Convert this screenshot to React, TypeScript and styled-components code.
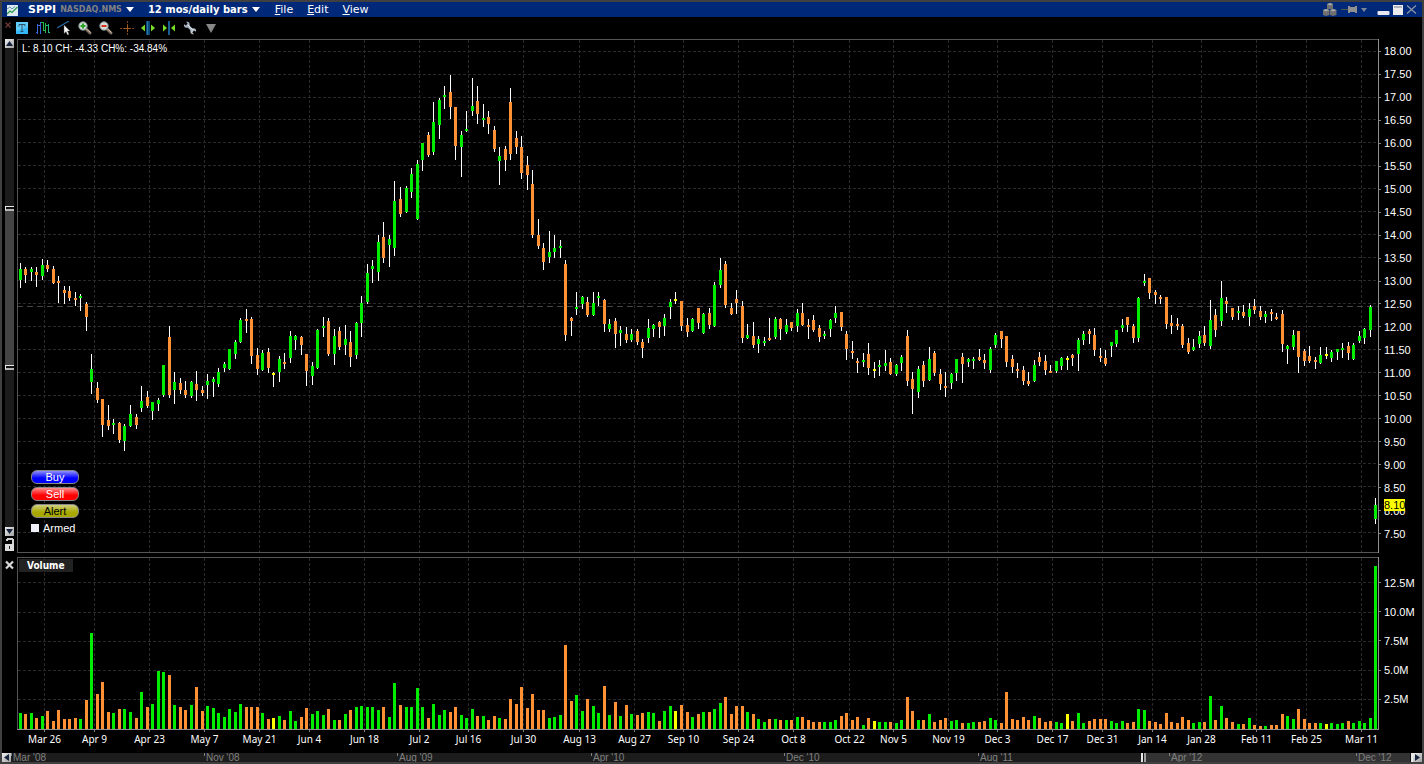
import React from 'react';
import styled, { createGlobalStyle } from 'styled-components';

const sans = '"Liberation Sans", Arial, sans-serif';
const wide = '"DejaVu Sans", Verdana, sans-serif';
const narrow = '"DejaVu Sans Condensed", Tahoma, sans-serif';

const UP = '#00ec00';
const DOWN = '#ff9033';
const FLAT = '#ffff00';

type Bar = { high: number; low: number; top: number; bottom: number; fill: string; volume: number };

/* One entry per session: wick top, wick bottom, body top, body bottom, direction, volume height. */
const SESSIONS = `
263 288 269 280 G 16,267 283 269 275 O 15,267 281 269 272 G 16,267 287 272 275 O 11,259 280 265 276 G 13,
260 272 265 269 O 18,266 284 269 283 O 8,276 303 281 283 O 19,286 304 290 293 O 10,286 301 291 298 O 10,
292 306 298 300 O 11,294 311 296 298 G 10,302 331 304 317 O 29,354 394 369 382 G 96,382 403 388 400 O 35,
399 437 399 425 O 47,405 430 420 426 O 17,419 434 423 425 G 16,422 443 423 440 O 20,424 451 426 441 G 20,
405 427 414 426 G 17,414 429 417 425 O 11,386 412 401 408 G 37,391 408 397 406 O 22,402 420 402 411 G 25,
398 411 400 404 G 58,365 397 365 395 G 57,326 398 337 395 O 54,372 404 382 390 G 24,378 394 383 390 O 22,
381 398 390 395 O 19,381 398 382 396 G 24,371 401 384 390 O 42,386 396 390 393 O 18,374 399 381 385 G 23,
377 397 379 382 G 21,368 387 372 384 G 16,362 372 364 368 G 12,349 370 349 369 G 20,340 359 342 354 G 17,
318 343 320 342 G 25,309 333 319 321 O 22,317 364 319 356 O 22,348 375 355 369 O 22,350 371 353 370 G 16,
348 373 352 368 O 10,372 387 373 375 Y 11,356 382 359 372 G 13,353 369 362 364 O 9,331 363 336 358 G 18,
335 350 336 340 G 8,336 355 337 345 O 12,354 386 354 371 O 21,362 385 366 376 G 15,329 369 330 368 G 18,
317 337 326 328 G 14,318 356 321 354 O 20,329 365 336 354 G 9,327 350 331 347 O 9,325 355 339 345 G 15,
331 367 342 357 O 19,322 359 323 355 G 22,296 337 303 323 G 23,264 304 273 302 G 22,260 283 266 269 G 22,
235 281 242 272 G 19,222 263 237 258 O 22,235 267 239 245 G 12,181 256 201 248 G 46,187 217 199 214 O 24,
186 213 188 212 G 22,168 198 174 192 G 22,160 220 164 219 G 41,143 171 143 160 G 22,132 157 135 155 O 11,
102 155 122 152 G 25,98 139 100 125 G 14,86 109 95 97 G 19,75 119 92 107 O 17,107 160 107 146 O 22,
131 177 135 147 G 14,111 132 129 131 G 11,78 116 106 111 G 20,86 124 101 114 O 13,104 127 118 120 G 13,
111 134 117 124 O 9,126 152 130 149 O 13,147 185 156 161 G 11,146 171 149 160 O 10,88 160 102 154 O 30,
131 154 138 147 O 25,136 179 147 173 O 42,156 190 165 175 O 21,170 238 184 235 O 35,219 249 235 246 O 19,
243 270 248 262 O 19,231 263 252 257 G 11,235 258 248 252 G 12,240 258 246 248 G 14,260 341 264 335 O 84,
317 336 318 321 O 28,292 315 307 309 G 34,296 309 297 304 G 18,297 317 302 315 O 30,292 316 303 315 G 23,
292 306 296 298 G 16,299 332 300 324 O 43,319 332 324 329 G 14,318 348 321 334 O 27,326 346 330 333 G 13,
327 343 334 340 O 24,329 342 334 340 G 15,329 345 331 342 O 14,339 358 342 348 O 16,319 343 328 338 G 17,
324 337 325 329 G 16,321 338 322 327 O 8,314 336 318 326 G 18,299 319 302 307 G 23,292 304 299 301 Y 18,
301 331 301 326 O 24,318 337 325 332 O 17,318 332 319 331 G 12,308 329 308 323 O 15,313 334 314 333 G 17,
308 329 313 325 O 17,282 327 285 326 G 20,258 288 270 285 G 26,261 308 264 305 O 32,303 315 308 314 O 15,
290 314 299 303 O 23,301 343 306 338 O 23,324 339 335 338 G 17,322 348 336 345 O 15,336 353 339 344 G 10,
337 346 341 343 G 7,318 341 338 340 O 10,317 339 319 337 G 10,318 340 319 329 O 9,319 334 325 332 G 9,
322 331 322 328 O 9,309 332 313 326 G 12,303 326 313 325 O 12,319 339 325 327 O 9,315 332 320 330 O 7,
325 342 328 337 O 7,331 339 334 336 G 7,319 337 320 329 G 7,306 323 313 318 G 9,312 331 312 327 O 13,
331 360 334 349 O 16,341 359 351 353 O 9,358 373 361 363 O 12,353 367 360 362 G 4,343 375 354 368 O 11,
362 378 369 371 Y 8,360 376 365 367 G 7,350 371 363 366 G 7,358 375 362 374 O 7,364 376 365 374 G 6,
355 371 357 363 G 9,330 386 336 381 O 32,372 414 379 389 O 18,366 398 369 392 G 9,361 387 365 381 O 9,
347 381 359 380 G 15,351 376 353 373 O 7,369 390 374 384 O 9,372 397 386 388 O 11,373 389 374 383 G 8,
359 381 359 373 G 9,353 383 357 364 O 6,358 367 359 362 G 6,357 369 359 361 G 7,349 361 357 360 O 7,
354 369 360 363 O 8,347 373 349 370 G 11,333 348 335 345 G 9,331 348 331 339 O 6,336 367 336 362 O 37,
355 373 359 367 O 10,363 378 369 371 O 9,366 385 370 381 O 12,372 386 381 384 O 9,360 382 365 381 G 13,
352 366 357 362 O 11,355 375 361 370 O 7,365 373 371 373 O 8,361 373 361 371 G 7,357 370 358 366 G 6,
356 370 358 360 Y 15,354 366 355 358 O 8,338 371 340 354 G 16,331 345 334 340 G 6,329 344 331 334 O 8,
328 356 335 350 O 10,348 362 356 358 O 10,350 366 358 364 O 10,342 357 342 346 G 8,330 347 330 344 G 6,
319 332 325 328 G 8,317 332 317 325 O 6,324 343 326 338 O 7,297 342 298 338 G 20,274 286 281 283 G 19,
278 299 278 293 O 8,290 304 292 295 O 7,295 304 297 299 O 5,297 329 297 324 O 16,315 334 323 326 O 7,
318 330 324 326 O 6,324 348 326 345 O 12,338 354 343 352 O 9,339 351 347 350 G 6,331 348 336 344 G 7,
326 346 335 343 O 7,300 349 320 346 G 33,309 337 315 330 O 9,281 326 298 321 G 23,297 313 301 304 O 11,
308 320 308 317 O 7,306 320 311 313 G 5,305 318 312 316 O 5,303 326 309 317 G 11,299 314 306 310 O 4,
306 320 311 317 O 3,311 323 314 317 G 3,309 321 312 314 O 4,313 320 317 319 O 4,310 352 314 344 O 15,
345 364 346 349 G 13,330 350 335 347 G 10,331 373 331 357 O 20,349 366 351 361 O 10,346 363 356 361 O 6,
357 369 360 362 O 6,347 364 355 363 G 6,347 359 354 356 Y 5,350 362 352 358 G 6,349 360 349 352 G 5,
343 358 348 350 G 6,342 360 346 353 O 8,343 360 345 359 G 6,331 343 336 341 G 8,328 344 329 338 G 6,
305 337 307 330 G 11,498 524 505 519 G 163`;

const FILLS: Record<string, string> = { G: UP, O: DOWN, Y: FLAT };

const bars: Bar[] = SESSIONS.trim().split(',').map((row) => {
  const [high, low, top, bottom, kind, volume] = row.trim().split(' ');
  return { high: +high, low: +low, top: +top, bottom: +bottom, fill: FILLS[kind], volume: +volume };
});

const barX = (index: number) => Math.floor(20.3 + 5.51 * index);

const DATES: [string, number][] = [
  ['Mar 26', 44], ['Apr 9', 94], ['Apr 23', 149], ['May 7', 204], ['May 21', 259], ['Jun 4', 309],
  ['Jun 18', 364], ['Jul 2', 419], ['Jul 16', 468], ['Jul 30', 523], ['Aug 13', 579], ['Aug 27', 634],
  ['Sep 10', 683], ['Sep 24', 738], ['Oct 8', 793], ['Oct 22', 849], ['Nov 5', 893], ['Nov 19', 948],
  ['Dec 3', 997], ['Dec 17', 1052], ['Dec 31', 1102], ['Jan 14', 1152], ['Jan 28', 1201],
  ['Feb 11', 1256], ['Feb 25', 1306], ['Mar 11', 1361],
];

const PRICE_LINES = [51, 74, 97, 119, 142, 165, 188, 211, 234, 257, 280, 303, 326, 349, 372, 395, 418, 441, 463, 486, 509, 532];
const PRICES = PRICE_LINES.map((_, i) => (18 - i * 0.5).toFixed(2));
const VOLUME_LINES = [582, 612, 641, 670, 699];
const VOLUMES = ['12.5M', '10.0M', '7.5M', '5.0M', '2.5M'];

const HISTORY: [string, number][] = [
  ["Mar '08", 193], ["Nov '08", 193], ["Aug '09", 194], ["Apr '10", 193],
  ["Dec '10", 194], ["Aug '11", 191], ["Apr '12", 187], ["Dec '12", 57],
];

const CHART_LEFT = 17;
const CHART_RIGHT = 1379;
const dateColumns = DATES.map(([, x], i) => (i === DATES.length - 1 ? CHART_RIGHT : DATES[i + 1][1]) - x)
  .reduce((tracks, gap) => `${tracks} minmax(0, ${gap}fr)`, `minmax(0, ${DATES[0][1] - CHART_LEFT}fr)`);

const GlobalStyle = createGlobalStyle`
  *, *::before, *::after { box-sizing: border-box; }
  body { margin: 0; background: #000; }
  button { margin: 0; padding: 0; border: 0; background: none; color: inherit; font: inherit; }
`;

const Frame = styled.div`
  display: flex;
  flex-direction: column;
  height: 100vh;
  min-height: 480px;
  border: 2px solid #404040;
  background: #000;
  color: #fff;
  font: 11px/12px ${sans};
  overflow: hidden;
`;

const TitleBar = styled.header`
  display: flex;
  align-items: center;
  flex: none;
  height: 15px;
  padding: 0 5px;
  background: linear-gradient(#00297a, #002878);
  white-space: nowrap;
  font-family: ${wide};
`;

const AppIcon = styled.svg`
  width: 11px;
  height: 12px;
  margin-right: 10px;
`;

const PickerButton = styled.button`
  display: flex;
  align-items: center;
  gap: 4px;
  margin-right: 14px;
  font-weight: bold;
  line-height: 15px;
`;

const Symbol = styled.span`
  font-size: 11px;
`;

const Exchange = styled.span`
  font-size: 8px;
  color: #808080;
`;

const Period = styled.span`
  font-size: 10px;
`;

const Caret = styled.span<{ $color?: string; $small?: boolean }>`
  border: ${(p) => (p.$small ? 3 : 4)}px solid transparent;
  border-top: ${(p) => (p.$small ? 4 : 5)}px solid ${(p) => p.$color ?? '#fff'};
  border-bottom: 0;
`;

const Menu = styled.nav`
  display: flex;
  gap: 14px;
  flex: 1;
  padding-left: 1px;
`;

const MenuButton = styled.button`
  line-height: 15px;
  &::first-letter { text-decoration: underline; }
`;

const WindowTools = styled.div`
  display: flex;
  align-items: center;
  gap: 4px;
`;

const WindowButtons = styled.div`
  display: flex;
  align-items: center;
  gap: 3px;
  margin-left: 6px;
`;

const IconButton = styled.button`
  display: flex;
  align-items: center;
  justify-content: center;
`;

const ToolBar = styled.div`
  display: flex;
  align-items: center;
  flex: none;
  gap: 7px;
  height: 22px;
  padding: 0 3px;
`;

const ClosePanel = styled(IconButton)`
  width: 6px;
  height: 14px;
  align-items: flex-start;
  margin-right: -3px;
`;

const ToolButton = styled(IconButton)`
  width: 14px;
  height: 14px;
`;

const Workspace = styled.main`
  display: grid;
  flex: 1;
  min-height: 0;
  grid-template-columns: 15px minmax(0, 1fr) 43px;
  grid-template-rows: minmax(0, 514fr) 4px minmax(0, 173fr) 23px;
`;

const Gutter = styled.div<{ $row: number }>`
  grid-column: 1;
  grid-row: ${(p) => p.$row};
  display: flex;
  flex-direction: column;
  min-height: 0;
  padding: 0 3px;
`;

const ScrollArrow = styled.button`
  display: flex;
  align-items: center;
  justify-content: center;
  flex: none;
  width: 9px;
  height: 9px;
  background: linear-gradient(135deg, #f0f0f0, #a0a0a0);
`;

const Track = styled.div`
  display: flex;
  flex-direction: column;
  flex: 1;
  width: 9px;
  background: #1c1c1c;
`;

const TrackSpace = styled.div<{ $grow: number }>`
  flex: ${(p) => p.$grow} 1 0;
`;

const Thumb = styled.div`
  display: flex;
  flex-direction: column;
  justify-content: space-between;
  flex: 163 1 0;
  background: #444;
`;

const Grip = styled.div`
  height: 5px;
  border: solid #e8e8e8;
  border-width: 1px 0 2px 1px;
  border-bottom-color: #b4b4b4;
  background: #111;
`;

const LockButton = styled(IconButton)`
  width: 9px;
  height: 17px;
`;

const CloseStudy = styled(IconButton)`
  width: 9px;
  height: 15px;
`;

const Plot = styled.section<{ $row: number }>`
  position: relative;
  grid-column: 2;
  grid-row: ${(p) => p.$row};
  min-height: 0;
`;

const PlotCanvas = styled.svg`
  display: block;
  width: 100%;
  height: 100%;
`;

const Quote = styled.div`
  position: absolute;
  top: 4px;
  left: 5px;
  font-size: 10px;
`;

const StudyName = styled.h2`
  position: absolute;
  top: 2px;
  left: 2px;
  margin: 0;
  padding: 0 8px;
  background: #222;
  font: bold 10px/13px ${narrow};
`;

const TradePanel = styled.div`
  position: absolute;
  left: 14px;
  bottom: 18px;
  display: flex;
  flex-direction: column;
  gap: 3px;
`;

const TradeButton = styled.button<{ $light: string; $base: string; $ink?: string }>`
  width: 48px;
  height: 14px;
  border: 1px solid #88888c;
  border-radius: 6px;
  background: linear-gradient(${(p) => p.$light}, ${(p) => p.$base} 60%);
  color: ${(p) => p.$ink ?? '#fff'};
  line-height: 12px;
`;

const Armed = styled.label`
  display: flex;
  align-items: center;
  gap: 4px;
  height: 14px;
  input {
    appearance: none;
    width: 8px;
    height: 8px;
    margin: 0;
    background: #f0f0fa;
  }
`;

const Scale = styled.div<{ $row: number; $padding: string }>`
  position: relative;
  grid-column: 3;
  grid-row: ${(p) => p.$row};
  display: grid;
  grid-auto-rows: minmax(0, 1fr);
  min-height: 0;
  padding: ${(p) => p.$padding};
`;

const ScaleMark = styled.div`
  display: flex;
  align-items: center;
  gap: 3px;
  &::before {
    content: '';
    width: 2px;
    height: 1px;
    background: #808080;
  }
`;

const LastPrice = styled.div`
  position: absolute;
  top: calc(89% + 3px);
  left: 5px;
  background: #ffff00;
  color: #000;
`;

const DateAxis = styled.div`
  grid-column: 2;
  grid-row: 4;
  display: grid;
  grid-template-columns: ${dateColumns};
`;

const DateMark = styled.div`
  display: flex;
  flex-direction: column;
  align-items: center;
  gap: 1px;
  width: 1px;
  font: 10px/12px "Noto Sans", ${wide};
  white-space: nowrap;
  &:first-child { grid-column: 2; }
  &::before {
    content: '';
    width: 1px;
    height: 2px;
    background: #808080;
  }
`;

const History = styled.footer`
  display: flex;
  flex: none;
  height: 9px;
  background: #1c1c1c;
`;

const HistoryTrack = styled.div`
  position: relative;
  display: grid;
  flex: 1;
  grid-template-columns: ${HISTORY.map(([, w]) => `minmax(0, ${w}fr)`).join(' ')};
`;

const HistoryMark = styled.span`
  position: relative;
  padding-left: 2px;
  color: #808080;
  font-size: 10px;
  line-height: 9px;
  white-space: nowrap;
  &::before {
    content: '';
    position: absolute;
    top: 0;
    left: 0;
    width: 1px;
    height: 3px;
    background: #808080;
  }
`;

const HistoryWindow = styled.div`
  position: absolute;
  inset: 0 0 0 80.6%;
  border: solid #e8e8e8;
  border-width: 0 2px;
  box-shadow: inset 1px 0 #111, inset 3px 0 #a0a0a0, inset -1px 0 #111;
  background: #333;
`;

function Grid({ lines, top, bottom }: { lines: number[]; top: number; bottom: number }) {
  return (
    <g stroke="#2a2a2a" strokeDasharray="3 2">
      {lines.map((y) => <line key={y} x1="18" x2="1378" y1={y + 0.5} y2={y + 0.5} />)}
      {DATES.map(([, x]) => <line key={x} x1={x + 0.5} x2={x + 0.5} y1={top} y2={bottom} />)}
    </g>
  );
}

function PriceChart() {
  return (
    <PlotCanvas viewBox="17 39 1362 514" preserveAspectRatio="none" shapeRendering="crispEdges" role="img" aria-label="SPPI daily price">
      <Grid lines={PRICE_LINES} top={40} bottom={552} />
      <line x1="17" x2="1378" y1="306.5" y2="306.5" stroke="#444" strokeDasharray="6 4" />
      {bars.map((bar, i) => (
        <g key={i}>
          <rect x={barX(i)} y={bar.high} width="1" height={bar.low - bar.high} fill="#fff" />
          <rect x={barX(i) - 1} y={bar.top} width="3" height={bar.bottom - bar.top} fill={bar.fill} />
        </g>
      ))}
      <path d="M17.5 553V39.5H1378M18 552.5H1378" fill="none" stroke="#555" />
      <path d="M1378.5 39V553" stroke="#909090" />
    </PlotCanvas>
  );
}

function VolumeChart() {
  return (
    <PlotCanvas viewBox="17 557 1362 173" preserveAspectRatio="none" shapeRendering="crispEdges" role="img" aria-label="Volume">
      <Grid lines={VOLUME_LINES} top={558} bottom={729} />
      {bars.map((bar, i) => (
        <rect key={i} x={barX(i) - 1} y={729 - bar.volume} width="3" height={bar.volume} fill={bar.fill} />
      ))}
      <path d="M17.5 730V557.5H1378" fill="none" stroke="#555" />
      <path d="M1378.5 557V730M17 729.5H1379" stroke="#909090" />
    </PlotCanvas>
  );
}

function Magnifier({ color, plus }: { color: string; plus?: boolean }) {
  return (
    <svg width="14" height="14" viewBox="0 0 14 14">
      <path d="M8 8L12 12" stroke="#7a6a60" strokeWidth="3" strokeLinecap="round" />
      <path d="M8 7.500L12.500 11.500" stroke="#e0c8b0" />
      <circle cx="5" cy="5" r="4.200" fill="#d4dcd4" stroke="#7c8a90" />
      <path d={plus ? 'M2.500 5H7.500M5 2.500V7.500' : 'M2.500 5H7.500'} stroke={color} strokeWidth="2" />
    </svg>
  );
}

function Toolbar() {
  return (
    <ToolBar role="toolbar" aria-label="Chart tools">
      <ClosePanel aria-label="Hide toolbar">
        <svg width="6" height="8" viewBox="0 0 6 8"><path d="M.5 1.500L5.500 6.500M5.500 1.500L.5 6.500" stroke="#703838" strokeWidth="1.400" /></svg>
      </ClosePanel>
      <ToolButton aria-label="Text note">
        <svg width="14" height="14" viewBox="0 0 14 14">
          <rect x="1" y="1" width="12" height="12" fill="#35b8f5" />
          <path d="M1 1H13V6L1 10Z" fill="#62ccfa" />
          <path d="M4 5.500V3.500H10V5.500M7 3.500V10.500M5.500 10.500H8.500" fill="none" stroke="#2c5068" />
        </svg>
      </ToolButton>
      <ToolButton aria-label="Bar style">
        <svg width="14" height="14" viewBox="0 0 14 14" shapeRendering="crispEdges" fill="none">
          <path d="M1.500 3V13M0 11.500H2M2 4.500H4M4.500 1V13" stroke="#3468dc" />
          <path d="M5 1.500H7M7.500 1V10M9.500 2V12M8 9.500H10" stroke="#24b848" />
          <path d="M12.500 3V12M10 4.500H13M13 11.500H14" stroke="#24b878" />
        </svg>
      </ToolButton>
      <ToolButton aria-label="Trendline">
        <svg width="14" height="14" viewBox="0 0 14 14">
          <path d="M0 7L12 0" stroke="#2468a0" strokeWidth="1.200" />
          <path d="M7 4V12.500L9 10.700L10.500 14L12 13.300L10.500 10H13Z" fill="#f4f4f4" stroke="#555" strokeWidth=".4" />
        </svg>
      </ToolButton>
      <ToolButton aria-label="Zoom in"><Magnifier color="#28a428" plus /></ToolButton>
      <ToolButton aria-label="Zoom out"><Magnifier color="#d83020" /></ToolButton>
      <ToolButton aria-label="Crosshair">
        <svg width="14" height="14" viewBox="0 0 14 14" shapeRendering="crispEdges">
          <path d="M7.500 0V14M0 7.500H14" stroke="#7c4418" strokeDasharray="2 1" />
          <path d="M4 7.500H11M7.500 4V11" stroke="#a05c20" />
        </svg>
      </ToolButton>
      <ToolButton aria-label="Widen bars">
        <svg width="14" height="14" viewBox="0 0 14 14">
          <rect x="5" y="0" width="4" height="14" fill="#0c4878" /><rect x="6" y="0" width="1" height="14" fill="#2878a8" />
          <path d="M4 3.500V10.500L0 7ZM10 3.500V10.500L14 7Z" fill="#78dc28" />
        </svg>
      </ToolButton>
      <ToolButton aria-label="Narrow bars">
        <svg width="14" height="14" viewBox="0 0 14 14">
          <rect x="6" y="0" width="2" height="14" fill="#186090" />
          <path d="M1 3.500V10.500L5 7ZM13 3.500V10.500L9 7Z" fill="#78dc28" />
        </svg>
      </ToolButton>
      <ToolButton aria-label="Settings">
        <svg width="14" height="14" viewBox="0 0 14 14">
          <path d="M4.500 4.500L9.500 9.500" stroke="#a8b4c4" strokeWidth="2.600" />
          <path d="M3 .8L4.600 2.600L3 4.400L1 3.200C.4 5.400 2 7.200 4.600 6.600L6.600 4.400C7.200 2 5.400 .2 3 .8Z" fill="#a8b4c4" />
          <path d="M11 13.200L9.400 11.400L11 9.600L13 10.800C13.600 8.600 12 6.800 9.400 7.400L7.400 9.600C6.800 12 8.600 13.800 11 13.200Z" fill="#b8c0cc" />
          <path d="M5 4L10 9" stroke="#e4e8f0" />
        </svg>
      </ToolButton>
      <ToolButton aria-label="More tools">
        <svg width="12" height="9" viewBox="0 0 12 9"><path d="M1 0H11L6 9Z" fill="#888" /></svg>
      </ToolButton>
    </ToolBar>
  );
}

function Arrow({ d }: { d: string }) {
  return <svg width="7" height="7" viewBox="0 0 7 7"><path d={d} fill="#14243c" /></svg>;
}

export default function App() {
  return (
    <>
      <GlobalStyle />
      <Frame>
        <TitleBar>
          <AppIcon viewBox="0 0 11 12">
            <rect width="11" height="11" y="1" fill="#dce8f0" />
            <path d="M0 10L3 7L5 8.500L10.500 3" fill="none" stroke="#28a048" strokeWidth="1.300" />
            <path d="M0 5L3 3L5 5L8 2.500" fill="none" stroke="#6c98b8" />
          </AppIcon>
          <PickerButton aria-label="Symbol SPPI NASDAQ.NMS">
            <Symbol>SPPI</Symbol><Exchange>NASDAQ.NMS</Exchange><Caret />
          </PickerButton>
          <PickerButton aria-label="12 mos/daily bars">
            <Period>12 mos/daily bars</Period><Caret />
          </PickerButton>
          <Menu>
            <MenuButton>File</MenuButton>
            <MenuButton>Edit</MenuButton>
            <MenuButton>View</MenuButton>
          </Menu>
          <WindowTools>
            <IconButton aria-label="Group windows">
              <svg width="14" height="13" viewBox="0 0 14 13">
                <path d="M4 1L7 0L10 1V6H4ZM0 7L3 6L6.500 7V12L3 13L0 12ZM7 7L10 6L13.500 7V12L10 13L7 12Z" fill="#707070" />
                <path d="M4 1L7 0L10 1L7 2.500ZM0 7L3 6L6.500 7L3 8.500ZM7 7L10 6L13.500 7L10 8.500Z" fill="#a8a8a8" />
              </svg>
            </IconButton>
            <IconButton aria-label="Pin window">
              <svg width="16" height="9" viewBox="0 0 16 9" shapeRendering="crispEdges">
                <path d="M0 4H8V5H0Z" fill="#555" /><path d="M7 1H9V2H14V1H16V8H14V7H9V8H7Z" fill="#909090" />
              </svg>
            </IconButton>
            <IconButton aria-label="Window menu"><Caret $small $color="#7c8498" /></IconButton>
            <WindowButtons>
              <IconButton aria-label="Minimize"><svg width="13" height="11" viewBox="0 0 13 11"><rect x=".5" y="7" width="12" height="4" rx="1" fill="#e8e8f0" /></svg></IconButton>
              <IconButton aria-label="Maximize"><svg width="10" height="10" viewBox="0 0 10 10"><path d="M0 0H10V10H0Z" fill="#ececec" /><path d="M1 2H9" stroke="#707888" /></svg></IconButton>
              <IconButton aria-label="Close"><svg width="11" height="11" viewBox="0 0 11 11"><path d="M1 1.500L10 9.500M10 1.500L1 9.500" stroke="#9098a8" strokeWidth="1.200" /></svg></IconButton>
            </WindowButtons>
          </WindowTools>
        </TitleBar>
        <Toolbar />
        <Workspace>
          <Gutter $row={1}>
            <ScrollArrow aria-label="Scroll up"><Arrow d="M0 6L3.500 1L7 6Z" /></ScrollArrow>
            <Track>
              <TrackSpace $grow={158} />
              <Thumb><Grip /><Grip /></Thumb>
              <TrackSpace $grow={157} />
            </Track>
            <ScrollArrow aria-label="Scroll down"><Arrow d="M0 1L3.500 6L7 1Z" /></ScrollArrow>
            <LockButton aria-label="Lock scale">
              <svg width="9" height="13" viewBox="0 0 9 13" shapeRendering="crispEdges">
                <path d="M1 3V1H2V0H8V1H9V6H7V2H3V3Z" fill="#d0d0d0" />
                <path d="M0 6H9V13H0Z" fill="#dcdcdc" /><path d="M4 8H5V11H4Z" fill="#222" />
              </svg>
            </LockButton>
          </Gutter>
          <Plot $row={1}>
            <PriceChart />
            <Quote>L: 8.10 CH: -4.33 CH%: -34.84%</Quote>
            <TradePanel>
              <TradeButton $light="#9090ff" $base="#0000ff">Buy</TradeButton>
              <TradeButton $light="#ff9090" $base="#ff0000">Sell</TradeButton>
              <TradeButton $light="#d0d080" $base="#a8a800" $ink="#000">Alert</TradeButton>
              <Armed><input type="checkbox" />Armed</Armed>
            </TradePanel>
          </Plot>
          <Scale $row={1} $padding="1px 0 8px">
            {PRICES.map((price) => <ScaleMark key={price}>{price}</ScaleMark>)}
            <LastPrice>8.10</LastPrice>
          </Scale>
          <Gutter $row={3}>
            <CloseStudy aria-label="Remove volume">
              <svg width="9" height="10" viewBox="0 0 9 10"><path d="M1 1.500L8 8.500M8 1.500L1 8.500" stroke="#d8d8d8" strokeWidth="2.200" /></svg>
            </CloseStudy>
          </Gutter>
          <Plot $row={3}>
            <VolumeChart />
            <StudyName>Volume</StudyName>
          </Plot>
          <Scale $row={3} $padding="11px 0 16px">
            {VOLUMES.map((volume) => <ScaleMark key={volume}>{volume}</ScaleMark>)}
          </Scale>
          <DateAxis>
            {DATES.map(([label]) => <DateMark key={label}>{label}</DateMark>)}
          </DateAxis>
        </Workspace>
        <History>
          <ScrollArrow aria-label="Earlier"><Arrow d="M6 0L1 3.500L6 7Z" /></ScrollArrow>
          <HistoryTrack>
            <HistoryWindow />
            {HISTORY.map(([label]) => <HistoryMark key={label}>{label}</HistoryMark>)}
          </HistoryTrack>
          <ScrollArrow aria-label="Later"><Arrow d="M1 0L6 3.500L1 7Z" /></ScrollArrow>
        </History>
      </Frame>
    </>
  );
}
